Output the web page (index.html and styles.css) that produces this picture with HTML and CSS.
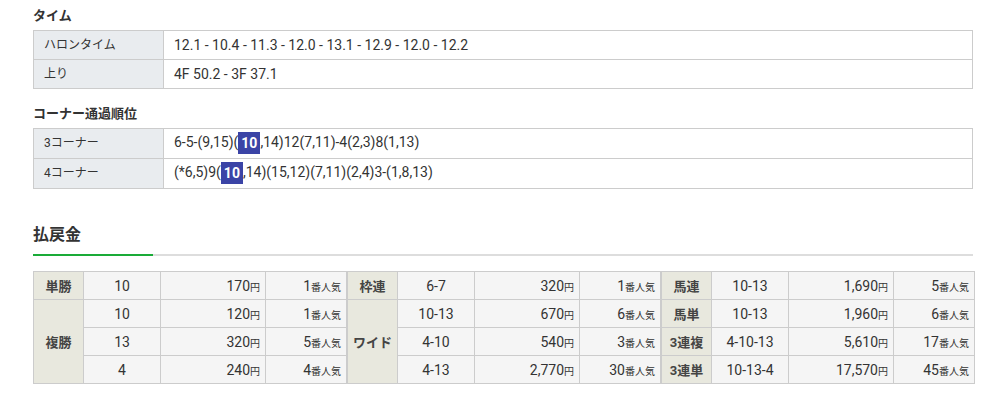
FILE: index.html
```html
<!DOCTYPE html>
<html lang="ja">
<head>
<meta charset="utf-8">
<link rel="stylesheet" href="styles.css">
</head>
<body>
<div class="page">
  <h3 class="sub-title">タイム</h3>
  <table class="info-table">
    <colgroup><col class="c-label"><col></colgroup>
    <tr><th>ハロンタイム</th><td>12.1 - 10.4 - 11.3 - 12.0 - 13.1 - 12.9 - 12.0 - 12.2</td></tr>
    <tr><th>上り</th><td>4F 50.2 - 3F 37.1</td></tr>
  </table>

  <h3 class="sub-title second">コーナー通過順位</h3>
  <table class="info-table corner">
    <colgroup><col class="c-label"><col></colgroup>
    <tr><th>3コーナー</th><td>6-5-(9,15)(<span class="hl">10</span>,14)12(7,11)-4(2,3)8(1,13)</td></tr>
    <tr><th>4コーナー</th><td>(*6,5)9(<span class="hl">10</span>,14)(15,12)(7,11)(2,4)3-(1,8,13)</td></tr>
  </table>

  <div class="pay-head"><h2>払戻金</h2></div>

  <div class="pay-wrap">
    <table class="pay">
      <colgroup><col class="p-l"><col class="p-h"><col class="p-y"><col class="p-n"></colgroup>
      <tr><th>単勝</th><td class="h">10</td><td class="y">170<small>円</small></td><td class="n">1<small>番人気</small></td></tr>
      <tr><th rowspan="3">複勝</th><td class="h">10</td><td class="y">120<small>円</small></td><td class="n">1<small>番人気</small></td></tr>
      <tr class="dash"><td class="h">13</td><td class="y">320<small>円</small></td><td class="n">5<small>番人気</small></td></tr>
      <tr class="dash"><td class="h">4</td><td class="y">240<small>円</small></td><td class="n">4<small>番人気</small></td></tr>
    </table>
    <table class="pay">
      <colgroup><col class="p-l"><col class="p-h"><col class="p-y"><col class="p-n"></colgroup>
      <tr><th>枠連</th><td class="h">6-7</td><td class="y">320<small>円</small></td><td class="n">1<small>番人気</small></td></tr>
      <tr><th rowspan="3">ワイド</th><td class="h">10-13</td><td class="y">670<small>円</small></td><td class="n">6<small>番人気</small></td></tr>
      <tr class="dash"><td class="h">4-10</td><td class="y">540<small>円</small></td><td class="n">3<small>番人気</small></td></tr>
      <tr class="dash"><td class="h">4-13</td><td class="y">2,770<small>円</small></td><td class="n">30<small>番人気</small></td></tr>
    </table>
    <table class="pay last">
      <colgroup><col class="p-l"><col class="p-h"><col class="p-y"><col class="p-n"></colgroup>
      <tr><th>馬連</th><td class="h">10-13</td><td class="y">1,690<small>円</small></td><td class="n">5<small>番人気</small></td></tr>
      <tr><th>馬単</th><td class="h">10-13</td><td class="y">1,960<small>円</small></td><td class="n">6<small>番人気</small></td></tr>
      <tr><th>3連複</th><td class="h">4-10-13</td><td class="y">5,610<small>円</small></td><td class="n">17<small>番人気</small></td></tr>
      <tr><th>3連単</th><td class="h">10-13-4</td><td class="y">17,570<small>円</small></td><td class="n">45<small>番人気</small></td></tr>
    </table>
  </div>
</div>
</body>
</html>
```

FILE: styles.css
```css
* { box-sizing: border-box; }
html, body { margin: 0; padding: 0; background: #fff; }
body {
  font-family: Roboto, "Noto Sans CJK JP", sans-serif;
  color: #333;
}
.page {
  padding: 6px 0 0 33px;
  width: 973px;
}
.sub-title {
  margin: 0 0 4px;
  font-size: 13px;
  line-height: 20px;
  font-weight: bold;
  color: #333;
}
.sub-title.second { margin-top: 15px; }

.info-table {
  width: 940px;
  border-collapse: collapse;
  table-layout: fixed;
}
.info-table .c-label { width: 130px; }
.info-table th,
.info-table td {
  border: 1px solid #ccc;
  padding: 4px 10px;
  line-height: 20px;
  height: 29px;
  text-align: left;
  vertical-align: middle;
}
.info-table th {
  background: #e9ecef;
  font-weight: normal;
  font-size: 12px;
}
.info-table td {
  font-size: 14px;
  background: #fff;
}
.info-table.corner th,
.info-table.corner td { height: 30px; padding-top: 3px; padding-bottom: 4px; }
.hl {
  display: inline-block;
  background: #3b44a6;
  color: #fff;
  font-weight: bold;
  padding: 0 3px;
  line-height: 22px;
  height: 22px;
  vertical-align: top;
}

.pay-head {
  margin-top: 34px;
  border-bottom: 2px solid #ddd;
  width: 940px;
}
.pay-head h2 {
  margin: 0 0 -2px;
  width: 120px;
  font-size: 16px;
  line-height: 24px;
  padding-bottom: 7px;
  font-weight: bold;
  color: #333;
  border-bottom: 2px solid #1aab38;
}

.pay-wrap {
  display: flex;
  width: 940px;
  margin-top: 15px;
}
.pay {
  width: 313px;
  border-collapse: collapse;
  table-layout: fixed;
  border: 1px solid #ccc;
}
.pay.last { width: 314px; }
.pay .p-l { width: 50px; }
.pay .p-h { width: 77px; }
.pay .p-y { width: 105px; }
.pay .p-n { width: 81px; }
.pay th,
.pay td {
  border: 1px solid #ccc;
  height: 28px;
  padding: 0 5px;
  vertical-align: middle;
  white-space: nowrap;
}
.pay th {
  background: #e8e8de;
  font-size: 13px;
  font-weight: bold;
  text-align: center;
  color: #444;
}
.pay td {
  background: #f5f5f5;
  font-size: 14px;
  color: #333;
}
.pay td.h { text-align: center; }
.pay td.y, .pay td.n { text-align: right; }
.pay small { font-size: 10px; }
.pay tr.dash td { border-top: 1px dashed #ccc; }
```
